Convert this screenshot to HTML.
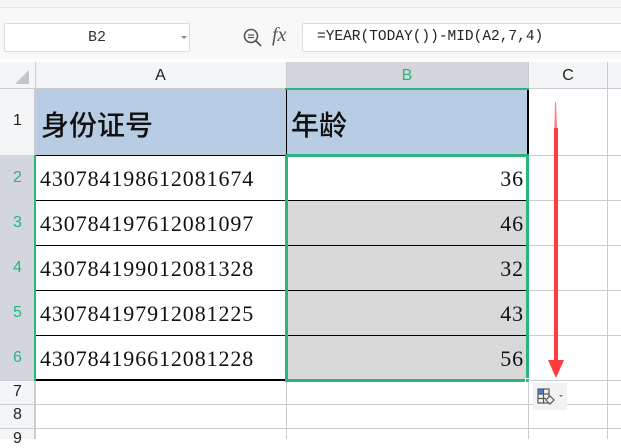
<!DOCTYPE html>
<html><head><meta charset="utf-8"><style>
*{margin:0;padding:0;box-sizing:border-box}
body{width:621px;height:439px;overflow:hidden;background:#fff;position:relative;font-family:"Liberation Sans",sans-serif}
.a{position:absolute}
.num{font-family:"Liberation Serif",serif;font-size:22px;color:#111;letter-spacing:0.9px}
.rh{color:#2bb57a;font-size:16px;width:35px;text-align:center}
</style></head><body>
<div class="a" style="left:0;top:0;width:621px;height:8px;background:#f6f6f7;border-bottom:1px solid #e6e6e8"></div>
<div class="a" style="left:0;top:8px;width:621px;height:51px;background:#f8f8f9"></div>
<div class="a" style="left:4px;top:23px;width:186px;height:29px;background:#fff;border:1px solid #dcdde0;border-radius:2px;font-size:15px;color:#333;font-family:'Liberation Mono',monospace;text-align:center;line-height:27px">B2</div>
<div class="a" style="left:181px;top:36px;width:0;height:0;border-left:3px solid transparent;border-right:3px solid transparent;border-top:3px solid #888"></div>
<svg class="a" style="left:242px;top:27px" width="22" height="22" viewBox="0 0 22 22"><circle cx="9" cy="9" r="6.5" fill="none" stroke="#555" stroke-width="1.6"/><line x1="6" y1="8" x2="12" y2="8" stroke="#555" stroke-width="1.2"/><line x1="6" y1="10.5" x2="12" y2="10.5" stroke="#555" stroke-width="1.2"/><line x1="14" y1="14" x2="19" y2="19" stroke="#555" stroke-width="1.8"/></svg>
<div class="a" style="left:272px;top:24px;font-family:'Liberation Serif',serif;font-style:italic;font-size:20px;color:#555">fx</div>
<div class="a" style="left:302px;top:23px;width:330px;height:29px;background:#fff;border:1px solid #dcdde0;border-radius:2px;font-family:'Liberation Mono',monospace;font-size:14.5px;color:#222;line-height:27px;padding-left:14px;letter-spacing:0px">=YEAR(TODAY())-MID(A2,7,4)</div>
<!-- column headers -->
<div class="a" style="left:0;top:62px;width:621px;height:27px;background:#f4f5f7;border-bottom:1px solid #c9ccd1"></div>
<div class="a" style="left:286px;top:62px;width:242px;height:27px;background:#d3d6dc"></div>
<div class="a" style="left:15px;top:70px;width:0;height:0;border-left:14px solid transparent;border-bottom:14px solid #c3c5c9"></div>
<div class="a" style="left:35px;top:62px;width:251px;height:27px;text-align:center;line-height:27px;font-size:16px;color:#222">A</div>
<div class="a" style="left:286px;top:62px;width:242px;height:27px;text-align:center;line-height:27px;font-size:16px;color:#2bb57a">B</div>
<div class="a" style="left:528px;top:62px;width:80px;height:27px;text-align:center;line-height:27px;font-size:16px;color:#222">C</div>
<!-- row header column -->
<div class="a" style="left:0;top:89px;width:35px;height:350px;background:#f4f5f7;border-right:1px solid #c9ccd1"></div>
<div class="a" style="left:0;top:155px;width:35px;height:225px;background:#d3d6dc"></div>
<!-- grid lines -->
<div class="a" style="left:35px;top:62px;width:1px;height:377px;background:#c9ccd1"></div>
<div class="a" style="left:286px;top:62px;width:1px;height:377px;background:#c9ccd1"></div>
<div class="a" style="left:528px;top:62px;width:1px;height:377px;background:#c9ccd1"></div>
<div class="a" style="left:607px;top:62px;width:1px;height:377px;background:#c9ccd1"></div>
<div class="a" style="left:35px;top:155px;width:586px;height:1px;background:#c9ccd1"></div>
<div class="a" style="left:35px;top:200px;width:586px;height:1px;background:#c9ccd1"></div>
<div class="a" style="left:35px;top:245px;width:586px;height:1px;background:#c9ccd1"></div>
<div class="a" style="left:35px;top:290px;width:586px;height:1px;background:#c9ccd1"></div>
<div class="a" style="left:35px;top:335px;width:586px;height:1px;background:#c9ccd1"></div>
<div class="a" style="left:0;top:380px;width:621px;height:1px;background:#c9ccd1"></div>
<div class="a" style="left:0;top:404px;width:621px;height:1px;background:#c9ccd1"></div>
<div class="a" style="left:0;top:428px;width:621px;height:1px;background:#c9ccd1"></div>
<!-- row 1 -->
<div class="a" style="left:36px;top:89px;width:492px;height:66px;background:#b8cce4"></div>
<div class="a" style="left:286px;top:89px;width:1px;height:66px;background:#000"></div>
<div class="a" style="left:527px;top:89px;width:2px;height:66px;background:#000"></div>
<div class="a" style="left:41px;top:104px;font-family:'Liberation Sans','Noto Sans CJK SC',sans-serif;font-size:28px;font-weight:500;color:#111">身份证号</div>
<div class="a" style="left:291px;top:104px;font-family:'Liberation Sans','Noto Sans CJK SC',sans-serif;font-size:28px;font-weight:500;color:#111">年龄</div>
<div class="a rh" style="left:0;top:112px;color:#222">1</div>
<!-- data rows -->
<div class="a" style="left:286px;top:200px;width:242px;height:180px;background:#d9d9d9"></div>
<div class="a" style="left:36px;top:155px;width:250px;height:1px;background:#000"></div>
<div class="a" style="left:36px;top:200px;width:492px;height:1px;background:#000"></div>
<div class="a" style="left:36px;top:245px;width:492px;height:1px;background:#000"></div>
<div class="a" style="left:36px;top:290px;width:492px;height:1px;background:#000"></div>
<div class="a" style="left:36px;top:335px;width:492px;height:1px;background:#000"></div>
<div class="a" style="left:36px;top:379px;width:250px;height:2px;background:#000"></div>
<div class="a" style="left:34px;top:155px;width:2px;height:226px;background:#2bb57a"></div>
<div class="a" style="left:285px;top:154px;width:244px;height:228px;border:3px solid #2bb57a"></div>
<div class="a" style="left:525px;top:378px;width:5px;height:5px;background:#2bb57a;border:1px solid #fff"></div>
<div class="a" style="left:285px;top:88px;width:244px;height:2px;background:#2bb57a"></div>

<div class="a rh" style="top:169px">2</div>
<div class="a rh" style="top:214px">3</div>
<div class="a rh" style="top:259px">4</div>
<div class="a rh" style="top:304px">5</div>
<div class="a rh" style="top:349px">6</div>
<div class="a rh" style="top:383px;color:#222">7</div>
<div class="a rh" style="top:406px;color:#222">8</div>
<div class="a rh" style="top:430px;color:#222">9</div>

<div class="a num" style="left:40px;top:166px">430784198612081674</div>
<div class="a num" style="left:40px;top:211px">430784197612081097</div>
<div class="a num" style="left:40px;top:256px">430784199012081328</div>
<div class="a num" style="left:40px;top:301px">430784197912081225</div>
<div class="a num" style="left:40px;top:346px">430784196612081228</div>
<div class="a num" style="left:470px;width:54px;text-align:right;top:166px">36</div>
<div class="a num" style="left:470px;width:54px;text-align:right;top:211px">46</div>
<div class="a num" style="left:470px;width:54px;text-align:right;top:256px">32</div>
<div class="a num" style="left:470px;width:54px;text-align:right;top:301px">43</div>
<div class="a num" style="left:470px;width:54px;text-align:right;top:346px">56</div>
<!-- arrow -->
<svg class="a" style="left:545px;top:98px" width="24" height="282"><path d="M10 4 L11 4 L12.5 40 L9 40 Z" fill="#ff8080"/><rect x="9" y="30" width="4" height="232" fill="#ff3b3b"/><path d="M3 262 L19 262 L11 280 Z" fill="#ff3b3b"/></svg>
<!-- paste icon -->
<div class="a" style="left:533px;top:383px;width:34px;height:27px;background:#f1f2f4"></div>
<svg class="a" style="left:537px;top:388px" width="30" height="18" viewBox="0 0 30 18"><rect x="1" y="1" width="11" height="14" fill="none" stroke="#555" stroke-width="1.2"/><line x1="1" y1="6" x2="12" y2="6" stroke="#555" stroke-width="1.2"/><line x1="1" y1="10.5" x2="9" y2="10.5" stroke="#555" stroke-width="1.2"/><line x1="6.5" y1="1" x2="6.5" y2="15" stroke="#555" stroke-width="1.2"/><rect x="1.5" y="1.5" width="4.5" height="4" fill="#4a7fd4"/><path d="M13 8 L17 12 L13 16 L9 12 Z" fill="#fff" stroke="#555" stroke-width="1.2"/><path d="M22 7 L26 7 L24 9 Z" fill="#777"/></svg>
</body></html>
